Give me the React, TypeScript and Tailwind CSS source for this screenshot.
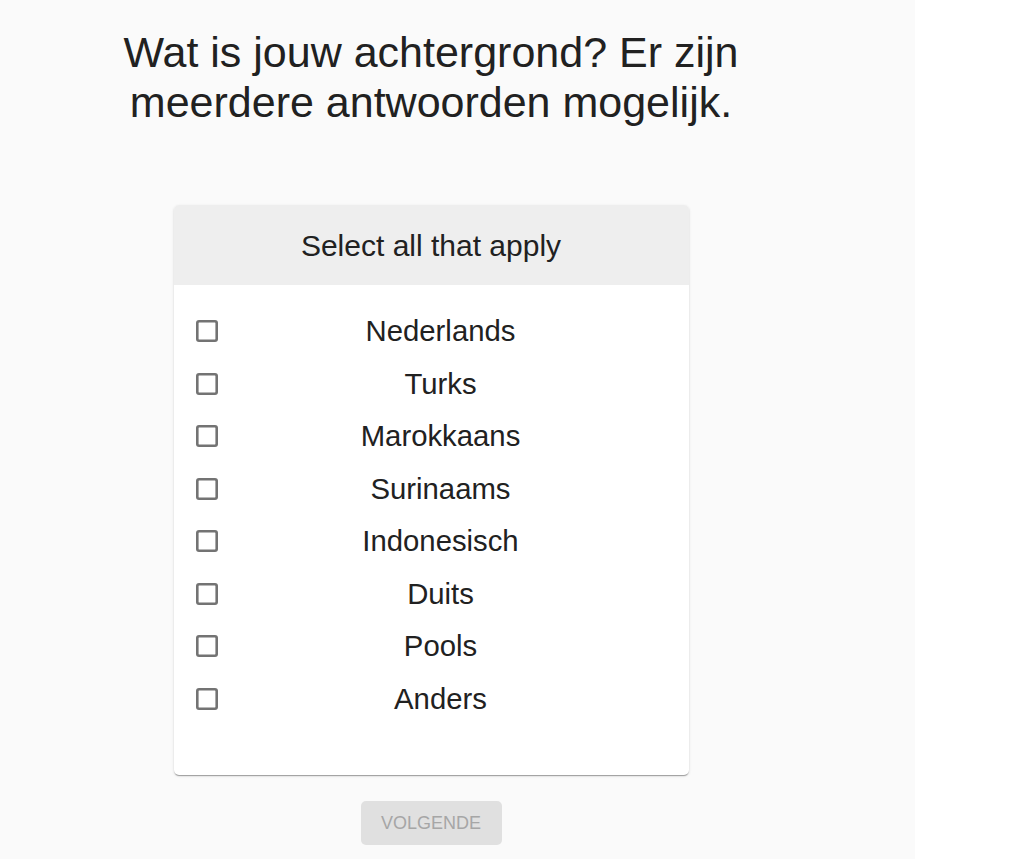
const OPTIONS = [
  "Nederlands",
  "Turks",
  "Marokkaans",
  "Surinaams",
  "Indonesisch",
  "Duits",
  "Pools",
  "Anders",
];

const FONT = { fontFamily: '"Liberation Sans", Arial, sans-serif' };

export default function App() {
  return (
    <div className="flex min-h-screen bg-white" style={FONT}>
      <div className="min-h-screen w-[915px] bg-[#fafafa]">
        <div className="flex w-[862px] flex-col items-center pt-[27px]">
          <h1 className="w-[640px] text-center text-[43px] font-normal leading-[50px] text-[#212121]">
            Wat is jouw achtergrond? Er zijn meerdere antwoorden mogelijk.
          </h1>

          <div className="mt-[78px] w-[515px] overflow-hidden rounded-[5px] bg-white shadow-[0_2px_1px_-1px_rgba(0,0,0,0.2),0_1px_1px_0_rgba(0,0,0,0.14),0_1px_3px_0_rgba(0,0,0,0.12)]">
            <div className="flex h-[80px] items-center justify-center bg-[#eeeeee] text-[30px] text-[#212121]">
              Select all that apply
            </div>
            <ul className="pb-[50px] pt-[20px]">
              {OPTIONS.map((option) => (
                <li key={option}>
                  <label className="flex h-[52.5px] cursor-pointer items-center pl-[22px] pr-[25px]">
                    <span className="h-[22px] w-[22px] shrink-0 rounded-[3px] shadow-[inset_0_0_0_2.6px_#737373]" />
                    <span className="flex-1 text-center text-[29.3px] text-[#212121]">
                      {option}
                    </span>
                  </label>
                </li>
              ))}
            </ul>
          </div>

          <button
            type="button"
            disabled
            className="mt-[26px] h-[44px] w-[141px] rounded-[5px] bg-[#e0e0e0] text-[18px] uppercase text-[#a6a6a6]"
          >
            Volgende
          </button>
        </div>
      </div>
    </div>
  );
}
